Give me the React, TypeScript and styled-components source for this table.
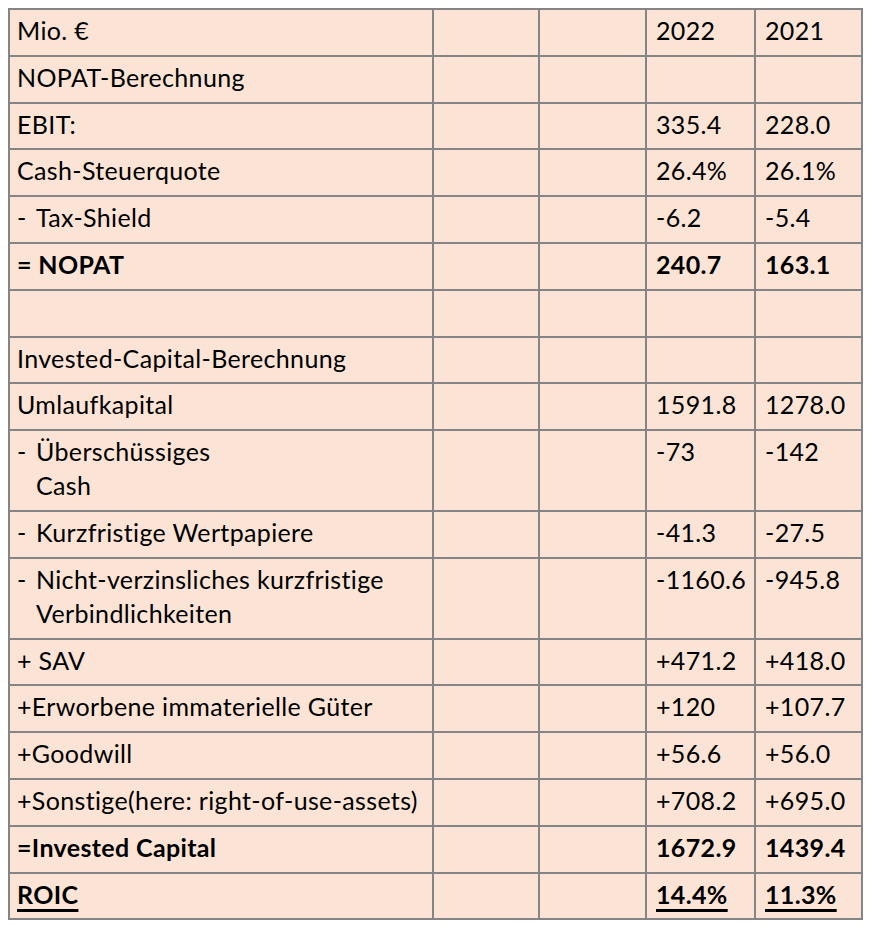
import React from "react";
import styled, { createGlobalStyle } from "styled-components";

const Global = createGlobalStyle`
  html, body { margin: 0; padding: 0; background: #ffffff; }
  body { padding: 8px 0 0 8px; }
`;

const Table = styled.table`
  border-collapse: collapse;
  table-layout: fixed;
  width: 853px;
  background: #fbe4d5;
  font-family: Lato, "Open Sans", sans-serif;
  font-size: 25px;
  letter-spacing: 0.35px;
  color: #000;
  border: 2px solid #858585;
`;

const Col = styled.col<{ $w: number }>`
  width: ${(p) => p.$w}px;
`;

const Cell = styled.td<{ $bold?: boolean; $num?: boolean }>`
  border: 2px solid #858585;
  padding: 3px 4px 7.8px ${(p) => (p.$num ? "9px" : "7px")};
  line-height: 34px;
  vertical-align: top;
  font-weight: ${(p) => (p.$bold ? 700 : 400)};
  white-space: nowrap;
`;

const Label = styled.div`
  display: flex;
  white-space: normal;
`;

const Dash = styled.span`
  flex: 0 0 19px;
`;

const Under = styled.span`
  text-decoration: underline;
  text-decoration-thickness: 3px;
  text-underline-offset: 5px;
`;

type Row = {
  label: React.ReactNode;
  dash?: boolean;
  a?: string;
  b?: string;
  bold?: boolean;
  under?: boolean;
};

const rows: Row[] = [
  { label: "Mio. €", a: "2022", b: "2021" },
  { label: "NOPAT-Berechnung" },
  { label: "EBIT:", a: "335.4", b: "228.0" },
  { label: "Cash-Steuerquote", a: "26.4%", b: "26.1%" },
  { label: "Tax-Shield", dash: true, a: "-6.2", b: "-5.4" },
  { label: "= NOPAT", a: "240.7", b: "163.1", bold: true },
  { label: "" },
  { label: "Invested-Capital-Berechnung" },
  { label: "Umlaufkapital", a: "1591.8", b: "1278.0" },
  {
    label: (
      <>
        Überschüssiges
        <br />
        Cash
      </>
    ),
    dash: true,
    a: "-73",
    b: "-142",
  },
  { label: "Kurzfristige Wertpapiere", dash: true, a: "-41.3", b: "-27.5" },
  {
    label: (
      <>
        Nicht-verzinsliches kurzfristige
        <br />
        Verbindlichkeiten
      </>
    ),
    dash: true,
    a: "-1160.6",
    b: "-945.8",
  },
  { label: "+ SAV", a: "+471.2", b: "+418.0" },
  { label: "+Erworbene immaterielle Güter", a: "+120", b: "+107.7" },
  { label: "+Goodwill", a: "+56.6", b: "+56.0" },
  { label: "+Sonstige(here: right-of-use-assets)", a: "+708.2", b: "+695.0" },
  { label: "=Invested Capital", a: "1672.9", b: "1439.4", bold: true },
  { label: "ROIC", a: "14.4%", b: "11.3%", bold: true, under: true },
];

const widths = [424, 106, 107, 109, 107];

const wrap = (t: React.ReactNode, under?: boolean) =>
  under ? <Under>{t}</Under> : t;

export default function App() {
  return (
    <>
      <Global />
      <Table>
        <colgroup>
          {widths.map((w, i) => (
            <Col key={i} $w={w} />
          ))}
        </colgroup>
        <tbody>
          {rows.map((r, i) => (
            <tr key={i}>
              <Cell $bold={r.bold}>
                {r.dash ? (
                  <Label>
                    <Dash>-</Dash>
                    <span>{r.label}</span>
                  </Label>
                ) : (
                  wrap(r.label || "\u00a0", r.under)
                )}
              </Cell>
              <Cell />
              <Cell />
              <Cell $num $bold={r.bold}>
                {r.a ? wrap(r.a, r.under) : ""}
              </Cell>
              <Cell $num $bold={r.bold}>
                {r.b ? wrap(r.b, r.under) : ""}
              </Cell>
            </tr>
          ))}
        </tbody>
      </Table>
    </>
  );
}
